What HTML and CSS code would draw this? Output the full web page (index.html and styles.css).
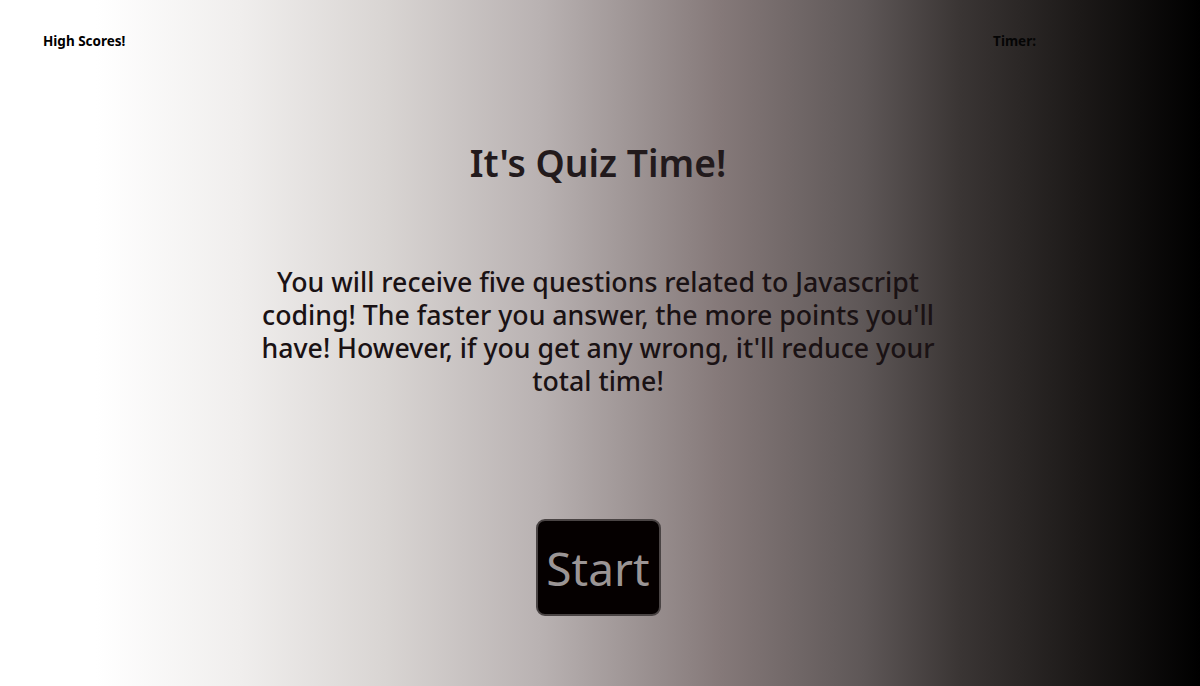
FILE: index.html
```html
<!DOCTYPE html>
<html lang="en">
<head>
<meta charset="utf-8">
<title>Quiz</title>
<link rel="stylesheet" href="styles.css">
</head>
<body>
<header class="topbar">
  <div class="scores">High Scores!</div>
  <div class="timer">Timer: <span class="time"></span></div>
</header>
<main class="intro">
  <h1 class="title">It's Quiz Time!</h1>
  <p class="blurb">You will receive five questions related to Javascript coding! The faster you answer, the more points you'll have! However, if you get any wrong, it'll reduce your total time!</p>
  <button class="start">Start</button>
</main>
</body>
</html>
```
FILE: styles.css
```css
html, body {
  margin: 0;
  padding: 0;
}
body {
  height: 686px;
  overflow: hidden;
  font-family: "Noto Sans", "Open Sans", sans-serif;
  color: #1c1416;
  background: linear-gradient(to right,
    #ffffff 0%, #ffffff 8%, #f0eeed 20%, #d9d5d3 32%, #b9b2b2 45%,
    #968c8c 55%, #857979 60%, #5e5757 72%, #3a3534 80%, #1c1918 90%, #000000 100%);
}
.topbar {
  display: flex;
  justify-content: space-between;
  padding: 32px 164px 0 43px;
  font-size: 13.5px;
  font-weight: 700;
  color: #000;
}
.timer { color: #050505; }
.intro {
  display: flex;
  flex-direction: column;
  align-items: center;
  padding-right: 4px;
}
.title {
  margin: 88px 0 0;
  font-size: 37.2px;
  font-weight: 600;
  color: #221a1c;
  line-height: 50px;
}
.blurb {
  margin: 77px 0 0;
  width: 700px;
  text-align: center;
  font-size: 26.7px;
  line-height: 33px;
  font-weight: 500;
  color: #1a1214;
}
.start {
  margin-top: 122px;
  width: 125px;
  height: 97px;
  background: #050000;
  color: #9b9595;
  border: 2px solid #4a4444;
  border-radius: 9px;
  font-family: "Noto Sans", "Open Sans", sans-serif;
  font-size: 46px;
  padding: 0;
  cursor: pointer;
}
```
